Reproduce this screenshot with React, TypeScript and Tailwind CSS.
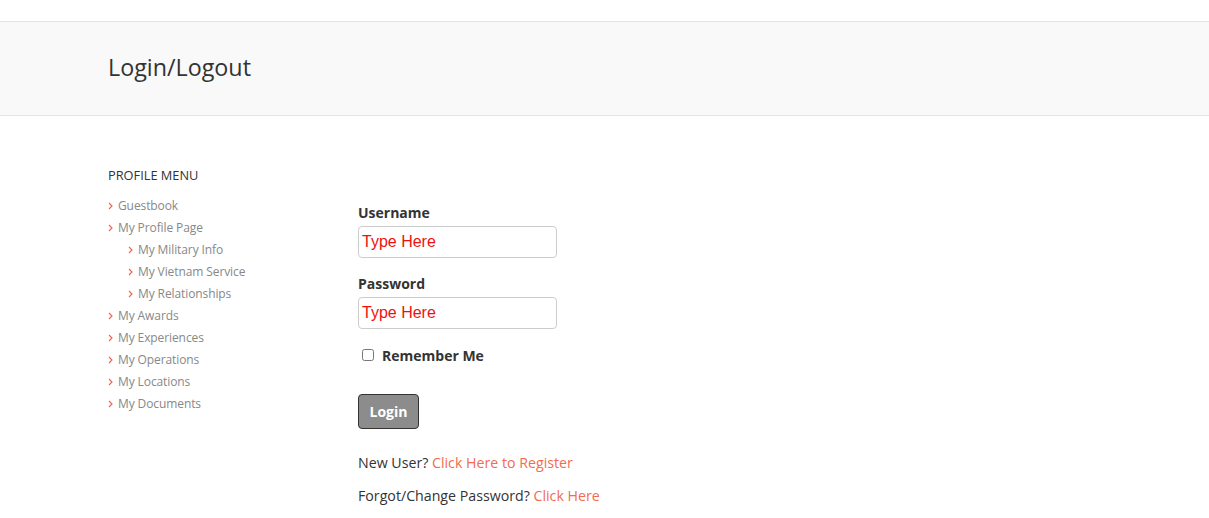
import React from "react";

const menu = [
  { label: "Guestbook", sub: false },
  { label: "My Profile Page", sub: false },
  { label: "My Military Info", sub: true },
  { label: "My Vietnam Service", sub: true },
  { label: "My Relationships", sub: true },
  { label: "My Awards", sub: false },
  { label: "My Experiences", sub: false },
  { label: "My Operations", sub: false },
  { label: "My Locations", sub: false },
  { label: "My Documents", sub: false },
];

function Chevron() {
  return (
    <svg width="5" height="8" viewBox="0 0 5 8" className="shrink-0">
      <path d="M1 1l3 3-3 3" fill="none" stroke="#f0604a" strokeWidth="1.1" />
    </svg>
  );
}

export default function App() {
  return (
    <div className="min-h-[518px] bg-white text-[#333] font-['Open_Sans',sans-serif]">
      {/* Page title bar */}
      <div className="h-[21px]" />
      <div className="h-[95px] bg-[#f9f9f9] border-y border-[#e4e4e4] flex items-center">
        <h1 className="pl-[108px] text-[23.3px] font-normal text-[#333] leading-none -mt-[2px]">
          Login/Logout
        </h1>
      </div>

      <div className="flex pl-[108px] pt-[51px]">
        {/* Sidebar */}
        <aside className="w-[250px]">
          <h3 className="text-[12.8px] uppercase text-[#333] leading-[16px]">Profile Menu</h3>
          <ul className="mt-[12px]">
            {menu.map((m) => (
              <li
                key={m.label}
                className={`flex items-center h-[22px] gap-[5px] text-[12px] tracking-[-0.1px] text-[#888] ${m.sub ? "pl-[20px]" : ""}`}
              >
                <Chevron />
                <span>{m.label}</span>
              </li>
            ))}
          </ul>
        </aside>

        {/* Login form */}
        <form className="pt-[36px] w-[300px]" onSubmit={(e) => e.preventDefault()}>
          <label className="block text-[14px] font-bold leading-[20px]">Username</label>
          <input
            type="text"
            placeholder="Type Here"
            className="mt-[3px] block w-[199px] h-[32px] border border-[#ccc] rounded-[4px] px-[3px] text-[16px] font-['Liberation_Sans',Arial,sans-serif] placeholder:text-[#f01010] text-[#f01010]"
          />
          <label className="block mt-[16px] text-[14px] font-bold leading-[20px]">Password</label>
          <input
            type="text"
            placeholder="Type Here"
            className="mt-[3px] block w-[199px] h-[32px] border border-[#ccc] rounded-[4px] px-[3px] text-[16px] font-['Liberation_Sans',Arial,sans-serif] placeholder:text-[#f01010] text-[#f01010]"
          />
          <div className="flex items-center mt-[17px] h-[18px]">
            <input type="checkbox" className="ml-[4px] w-[12px] h-[12px] m-0" />
            <span className="ml-[8px] text-[14px] font-bold">Remember Me</span>
          </div>
          <button
            type="submit"
            className="mt-[30px] block w-[61px] h-[35px] bg-[#8c8c8c] border border-[#333] rounded-[4px] text-white text-[14px] font-bold"
          >
            Login
          </button>
          <p className="mt-[24px] text-[14.2px] leading-[20px]">
            New User? <a className="text-[#f26c4f]">Click Here to Register</a>
          </p>
          <p className="mt-[13px] text-[14.2px] leading-[20px]">
            Forgot/Change Password? <a className="text-[#f26c4f]">Click Here</a>
          </p>
        </form>
      </div>
    </div>
  );
}
